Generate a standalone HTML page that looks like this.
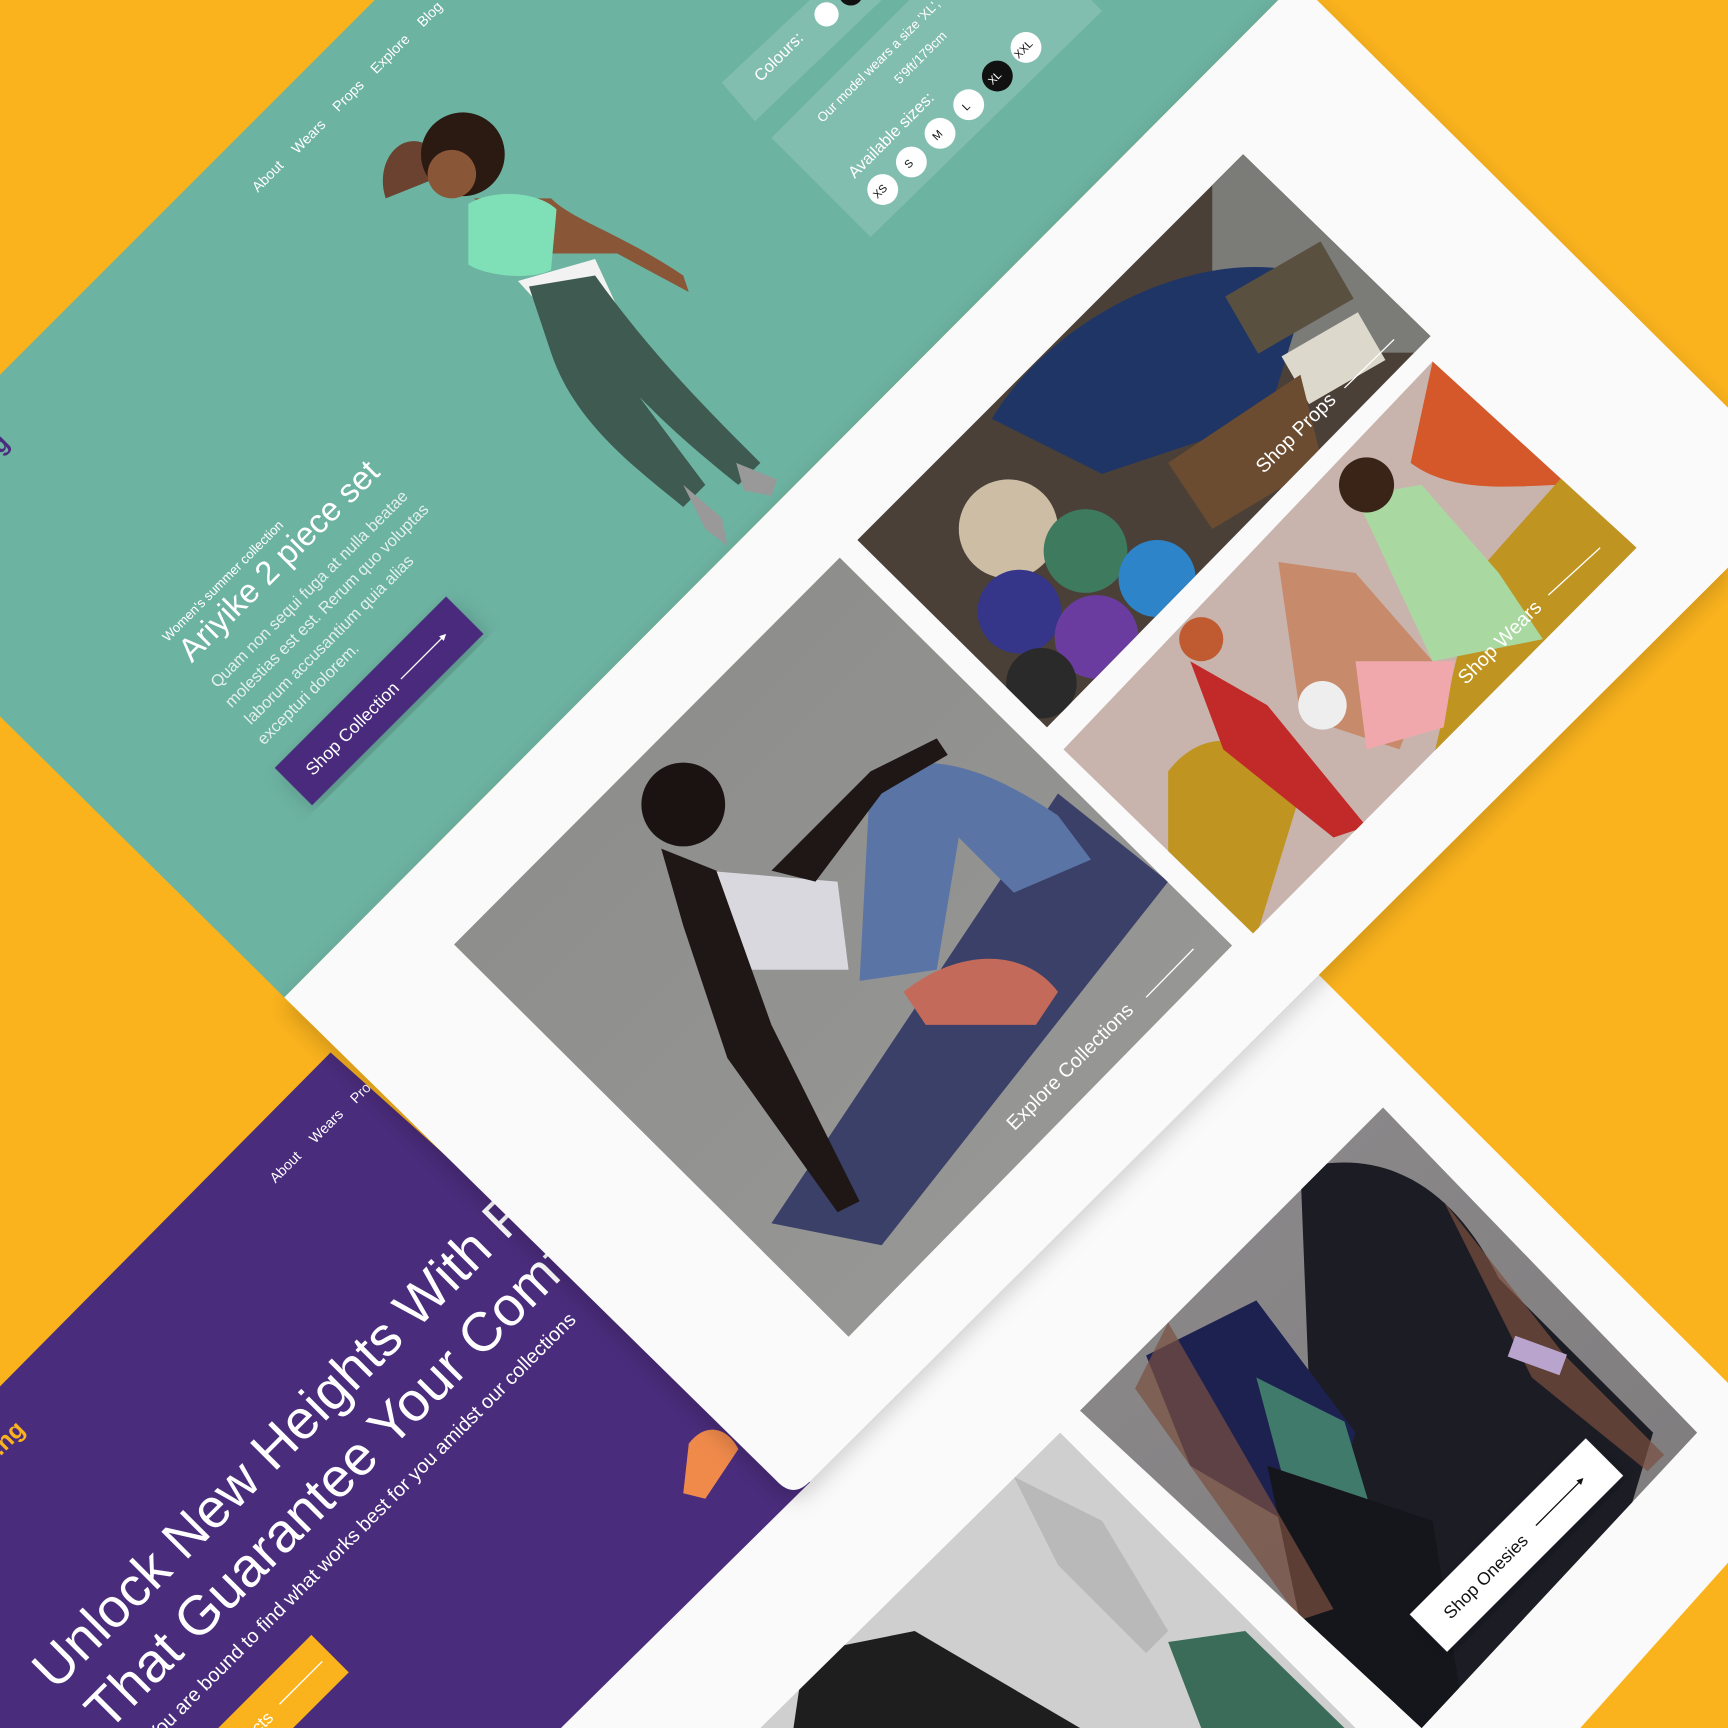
<!DOCTYPE html>
<html><head><meta charset="utf-8"><style>
html,body{margin:0;padding:0;background:#FBB31D;overflow:hidden;width:1728px;height:1728px}
svg{display:block}
text{font-family:"Liberation Sans",sans-serif}
</style></head><body>
<svg width="1728" height="1728" viewBox="0 0 1568 1568" xmlns="http://www.w3.org/2000/svg">
<defs>
<filter id="sh" x="-10%" y="-10%" width="120%" height="120%"><feDropShadow dx="0" dy="8" stdDeviation="10" flood-color="#000" flood-opacity="0.18"/></filter>
<linearGradient id="gExp" x1="0" y1="0" x2="1" y2="1"><stop offset="0" stop-color="#8a8a88"/><stop offset="1" stop-color="#9a9a98"/></linearGradient>
<linearGradient id="gOn" x1="0" y1="0" x2="1" y2="1"><stop offset="0" stop-color="#8e8c8d"/><stop offset="1" stop-color="#7a7879"/></linearGradient>
<clipPath id="cPurple"><polygon points="300,955 735,1345 509,1568 0,1568 0,1258"/></clipPath>
<clipPath id="cTeal"><polygon points="340,0 1160,0 258,905 0,650 0,340"/></clipPath>
<clipPath id="cProps"><polygon points="1128,140 1298,305 950,660 778,490"/></clipPath>
<clipPath id="cWears"><polygon points="1300,328 1485,497 1137,847 965,680"/></clipPath>
<clipPath id="cExp"><polygon points="762,506 1118,858 770,1213 412,857"/></clipPath>
<clipPath id="cOn"><polygon points="1255,1005 1540,1300 1290,1568 980,1280"/></clipPath>
<clipPath id="cBot"><polygon points="962,1300 1230,1568 690,1568"/></clipPath>
</defs>
<rect width="1568" height="1568" fill="#FBB31D"/>

<polygon points="1150,838 1568,1255 1568,1418 1434,1568 509,1568 680,1320" fill="#FAFAFA"/>
<g clip-path="url(#cOn)">
<rect x="900" y="1000" width="700" height="600" fill="url(#gOn)"/>
<path d="M1180,1060 C1260,1040 1320,1080 1360,1160 L1500,1300 L1420,1568 L1200,1568 Z" fill="#1b1c24"/>
<path d="M1040,1230 L1140,1180 L1230,1300 L1200,1400 L1080,1330 Z" fill="#1d2150"/>
<path d="M1140,1250 L1220,1290 L1250,1390 L1180,1400 Z" fill="#3f7a6a"/>
<path d="M1150,1330 L1300,1380 L1330,1568 L1200,1568 Z" fill="#15161c"/>
<path d="M1060,1200 L1030,1260 L1180,1470 L1210,1460 Z" fill="#7a5040" opacity="0.7"/>
<path d="M1310,1090 L1420,1230 L1510,1320 L1495,1335 L1390,1250 Z" fill="#7a5040" opacity="0.7"/>
<rect x="1370" y="1220" width="50" height="20" fill="#b8a4cc" transform="rotate(20 1395 1230)"/>
</g>
<g clip-path="url(#cBot)">
<rect x="680" y="1290" width="560" height="300" fill="#cfcfcf"/>
<path d="M920,1340 L1000,1380 L1060,1480 L1040,1500 L960,1420 Z" fill="#b9b9b9"/>
<path d="M1060,1490 L1130,1480 L1220,1568 L1090,1568 Z" fill="#3b6b59"/>
<path d="M730,1500 L830,1480 L980,1568 L720,1568 Z" fill="#1e1e1e"/>
</g>
<g transform="translate(1376,1402) rotate(-45)">
<rect x="-113" y="-24" width="226" height="48" fill="#fff" filter="url(#sh)"/>
<text x="-40" y="6" font-size="16" text-anchor="middle" fill="#111">Shop Onesies</text>
<line x1="25" y1="0" x2="85" y2="0" stroke="#111" stroke-width="1.2"/><path d="M80,-3 L86,0 L80,3" fill="#111"/>
</g>

<polygon points="300,955 735,1345 509,1568 0,1568 0,1258" fill="#4A2C7C"/>
<g clip-path="url(#cPurple)" fill="#fff">
<path d="M625,1310 C640,1290 660,1295 670,1315 L640,1360 L620,1355 Z" fill="#F08A4B"/>
<text font-size="13" transform="translate(262,1062) rotate(-45)" text-anchor="middle">About</text>
<text font-size="13" transform="translate(299,1025) rotate(-45)" text-anchor="middle">Wears</text>
<text font-size="13" transform="translate(335,990) rotate(-45)" text-anchor="middle">Props</text>
<text font-size="22" font-weight="bold" fill="#FBB31D" transform="translate(12,1310) rotate(-45)" text-anchor="middle">.ng</text>
<text font-size="50" font-weight="500" transform="translate(50,1535) rotate(-45)">Unlock New Heights With Products</text>
<text font-size="50" font-weight="500" transform="translate(98,1572) rotate(-45)">That Guarantee Your Comfort</text>
<text font-size="18" transform="translate(140,1582) rotate(-45)">You are bound to find what works best for you amidst our collections</text>
<g transform="translate(250,1550) rotate(-45)"><rect x="-130" y="-24" width="200" height="48" fill="#FBB31D"/>
<text x="-60" y="6" font-size="16" text-anchor="middle" fill="#fff">Shop Products</text>
<line x1="5" y1="0" x2="60" y2="0" stroke="#fff" stroke-width="1.2"/></g>
</g>

<polygon points="340,0 1160,0 258,905 0,650 0,340" fill="#6DB3A2"/>
<g clip-path="url(#cTeal)">
<text font-size="22" font-weight="bold" fill="#4A2C7C" transform="translate(5,408) rotate(-45)" text-anchor="middle">g</text>
<g fill="#fff" font-size="13">
<text transform="translate(246,163) rotate(-45)" text-anchor="middle">About</text>
<text transform="translate(283,127) rotate(-45)" text-anchor="middle">Wears</text>
<text transform="translate(319,90) rotate(-45)" text-anchor="middle">Props</text>
<text transform="translate(357,52) rotate(-45)" text-anchor="middle">Explore</text>
<text transform="translate(393,16) rotate(-45)" text-anchor="middle">Blog</text>
</g>
<path d="M350,180 C340,150 360,120 385,130 L400,160 Z" fill="#6b4130"/>
<circle cx="420" cy="140" r="38" fill="#2a1a12"/>
<circle cx="410" cy="158" r="22" fill="#8a5638"/>
<path d="M430,180 L500,180 C520,200 560,210 620,250 L625,265 L560,230 L500,230 Z" fill="#8a5638"/>
<path d="M425,185 C450,170 490,175 505,190 L500,245 C480,255 440,250 425,240 Z" fill="#7FE0B8"/>
<path d="M470,255 L540,235 L570,300 L520,310 Z" fill="#f2f2f2"/>
<path d="M480,260 L540,250 C590,320 640,370 690,420 L670,440 C620,400 600,380 580,360 L640,440 L620,460 C570,420 520,380 500,320 Z" fill="#3f5a50"/>
<path d="M668,420 L705,435 L700,450 L675,445 Z" fill="#999"/>
<path d="M620,440 L655,470 L660,495 L640,480 Z" fill="#999"/>
<polygon points="655,75 735,0 800,0 685,110" fill="#fff" opacity="0.15"/>
<polygon points="700,125 825,0 990,0 1000,10 790,215" fill="#fff" opacity="0.15"/>
<circle cx="750" cy="13" r="11" fill="#fff"/><circle cx="772" cy="-6" r="11" fill="#111"/>
<g fill="#fff">
<text font-size="15" transform="translate(710,55) rotate(-45)" text-anchor="middle">Colours:</text>
<text font-size="12" transform="translate(800,58) rotate(-45)" text-anchor="middle">Our model wears a size 'XL',</text>
<text font-size="12" transform="translate(838,55) rotate(-45)" text-anchor="middle">5'9ft/179cm</text>
<text font-size="15" transform="translate(812,126) rotate(-45)" text-anchor="middle">Available sizes:</text>
</g>
<g font-size="10" text-anchor="middle">
<circle cx="801" cy="172" r="14" fill="#fff"/><text transform="translate(801,176) rotate(-45)" fill="#111">XS</text>
<circle cx="827" cy="147" r="14" fill="#fff"/><text transform="translate(827,151) rotate(-45)" fill="#111">S</text>
<circle cx="853" cy="121" r="14" fill="#fff"/><text transform="translate(853,125) rotate(-45)" fill="#111">M</text>
<circle cx="879" cy="95" r="14" fill="#fff"/><text transform="translate(879,99) rotate(-45)" fill="#111">L</text>
<circle cx="905" cy="69" r="14" fill="#111"/><text transform="translate(905,73) rotate(-45)" fill="#fff">XL</text>
<circle cx="931" cy="43" r="14" fill="#fff"/><text transform="translate(931,47) rotate(-45)" fill="#111">XXL</text>
</g>
<g fill="#fff">
<text font-size="12" transform="translate(205,530) rotate(-45)" text-anchor="middle">Women's summer collection</text>
<text font-size="30" font-weight="500" transform="translate(260,516) rotate(-45)" text-anchor="middle">Ariyike 2 piece set</text>
</g>
<g fill="#fff" fill-opacity="0.8" font-size="15" text-anchor="middle">
<text transform="translate(284,538) rotate(-45)">Quam non sequi fuga at nulla beatae</text>
<text transform="translate(300,553) rotate(-45)">molestias est est. Rerum quo voluptas</text>
<text transform="translate(302,584) rotate(-45)">laborum accusantium quia alias</text>
<text transform="translate(283,633) rotate(-45)">excepturi dolorem.</text>
</g>
<g transform="translate(344,636) rotate(-45)"><rect x="-110" y="-24" width="220" height="48" fill="#4A2C7C" filter="url(#sh)"/>
<text x="-35" y="6" font-size="16" text-anchor="middle" fill="#fff">Shop Collection</text>
<line x1="28" y1="0" x2="85" y2="0" stroke="#fff" stroke-width="1.2"/><path d="M80,-3 L86,0 L80,3" fill="#fff"/></g>
</g>

<path d="M1160,0 L1195,0 L1568,370 L1568,515 L735,1344 Q720,1360 705,1344 L258,905 Z" fill="#FAFAFA" filter="url(#sh)"/>
<g clip-path="url(#cProps)">
<rect x="770" y="130" width="540" height="540" fill="#4a4038"/>
<rect x="1100" y="120" width="200" height="200" fill="#7b7b78"/>
<path d="M900,380 C960,280 1100,220 1190,250 L1150,380 L1000,430 Z" fill="#1e3566"/>
<rect x="1120" y="240" width="100" height="60" fill="#5a5040" transform="rotate(-30 1170 270)"/>
<rect x="1170" y="300" width="80" height="50" fill="#ddd8cc" transform="rotate(-30 1210 325)"/>
<path d="M1060,420 L1180,340 L1200,420 L1100,480 Z" fill="#6b4c30"/>
<circle cx="915" cy="480" r="45" fill="#cdbda4"/>
<circle cx="985" cy="500" r="38" fill="#3d7a5e"/>
<circle cx="1050" cy="525" r="35" fill="#2e84c8"/>
<circle cx="925" cy="555" r="38" fill="#35358a"/>
<circle cx="995" cy="578" r="38" fill="#6b3ca0"/>
<circle cx="945" cy="620" r="32" fill="#2a2a2a"/>
</g>
<g fill="#fff"><text font-size="18" transform="translate(1180,397) rotate(-45)" text-anchor="middle">Shop Props</text></g>
<line x1="1220" y1="352" x2="1265" y2="308" stroke="#fff" stroke-width="1.2"/>
<g clip-path="url(#cWears)">
<rect x="960" y="320" width="530" height="530" fill="#C8B4AD"/>
<path d="M1300,328 L1485,497 L1420,440 C1380,440 1320,450 1280,420 Z" fill="#D4582A"/>
<path d="M1420,430 L1485,497 L1300,690 L1340,520 Z" fill="#BF9420"/>
<path d="M1060,700 C1090,660 1140,660 1180,720 L1140,850 L1060,780 Z" fill="#BF9420"/>
<path d="M1230,450 L1290,440 L1360,520 L1400,580 L1300,600 Z" fill="#a9d9a0"/>
<circle cx="1240" cy="440" r="25" fill="#3a2418"/>
<path d="M1160,510 L1230,520 L1300,600 L1270,680 L1180,650 Z" fill="#c78a6a"/>
<path d="M1230,600 L1320,600 L1310,660 L1240,680 Z" fill="#f0a8ad"/>
<path d="M1080,600 L1150,640 L1240,750 L1210,760 L1110,680 Z" fill="#c22a2a"/>
<circle cx="1090" cy="580" r="20" fill="#c05a30"/>
<circle cx="1200" cy="640" r="22" fill="#eee"/>
</g>
<g fill="#fff"><text font-size="18" transform="translate(1365,587) rotate(-45)" text-anchor="middle">Shop Wears</text></g>
<line x1="1405" y1="540" x2="1452" y2="497" stroke="#fff" stroke-width="1.2"/>
<g clip-path="url(#cExp)">
<rect x="400" y="500" width="730" height="720" fill="url(#gExp)"/>
<path d="M960,720 L1060,800 L800,1130 L700,1110 Z" fill="#3a4068"/>
<path d="M790,700 C850,680 900,700 960,740 L990,780 L920,810 L870,760 L850,880 L780,890 Z" fill="#5b74a6"/>
<path d="M820,900 C870,860 930,860 960,900 L940,930 L840,930 Z" fill="#c46a5a"/>
<path d="M640,790 L760,800 L770,880 L680,880 Z" fill="#d8d8de"/>
<circle cx="620" cy="730" r="38" fill="#1a1312"/>
<path d="M600,770 L650,790 L700,930 L780,1090 L760,1100 L660,960 L620,840 Z" fill="#1f1716"/>
<path d="M700,790 L790,700 L850,670 L860,685 L800,720 L740,800 Z" fill="#1f1716"/>
</g>
<g fill="#fff"><text font-size="18" transform="translate(975,972) rotate(-45)" text-anchor="middle">Explore Collections</text></g>
<line x1="1040" y1="905" x2="1083" y2="861" stroke="#fff" stroke-width="1.2"/>
</svg>
</body></html>
